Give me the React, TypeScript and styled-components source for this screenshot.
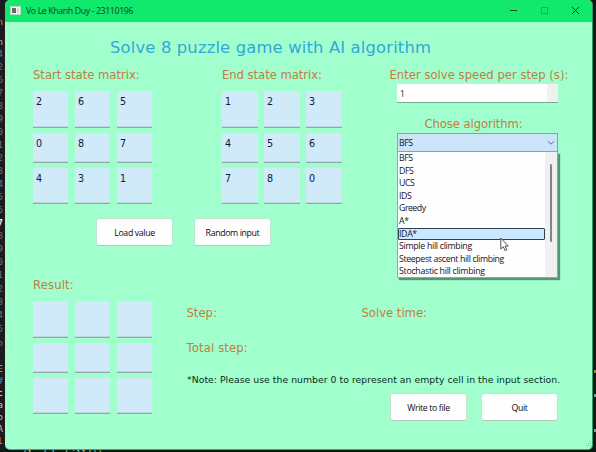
import React from "react";
import styled, { createGlobalStyle } from "styled-components";

const GlobalStyle = createGlobalStyle`
  * { box-sizing: border-box; }
  body { margin: 0; overflow: hidden; background: #151518; }
`;

const verdana = `"DejaVu Sans", Verdana, sans-serif`;
const segoe = `"Open Sans", "Segoe UI", sans-serif`;

const Desktop = styled.div`
  position: relative;
  display: grid;
  grid-template-columns: 5px 588px 3px;
  grid-template-rows: 450px 2px;
  width: 596px;
  height: 452px;
  overflow: hidden;
  background: #141619;
`;

const EditorEdge = styled.div`
  height: 450px;
  overflow: hidden;
  padding-top: 15px;
  background: #1c1c1e;
`;

const EditorLine = styled.div<{ $h: number; $color?: string; $bold?: boolean }>`
  display: flex;
  align-items: center;
  justify-content: flex-end;
  height: ${(p) => p.$h}px;
  padding-right: 2px;
  color: ${(p) => p.$color ?? "#6e7378"};
  font: ${(p) => (p.$bold ? "bold" : "normal")} 9px "DejaVu Sans Mono", monospace;
  line-height: 10px;
`;

const RightEdge = styled.div`
  height: 450px;
  padding-top: 370px;
  background: #15131a;
`;

const Speck = styled.div<{ $color: string; $gap: number }>`
  width: 2px;
  height: 3px;
  margin: 0 0 ${(p) => p.$gap}px 1px;
  background: ${(p) => p.$color};
`;

const BottomEdge = styled.div`
  grid-column: 1 / -1;
  height: 2px;
  overflow: hidden;
  padding-left: 22px;
  background: #0b1712;
  color: #c8d0cc;
  font: 9px/9px "DejaVu Sans Mono", monospace;
`;

const Window = styled.main`
  display: flex;
  flex-direction: column;
  width: 588px;
  height: 450px;
  overflow: hidden;
  border-radius: 5px;
  border-bottom: 1px solid #45a878;
  border-right: 1px solid #2d9a62;
  background: #a1ffce;
`;

const TitleBar = styled.header`
  display: flex;
  align-items: center;
  flex: none;
  height: 22px;
  padding: 0 12px 1px 5px;
  background: #11e96c;
  color: #07451f;
`;

const Caption = styled.span`
  flex: 1;
  margin-left: 5px;
  padding-top: 1px;
  font: 8.8px/14px ${segoe};
  letter-spacing: -0.39px;
  white-space: nowrap;
`;

const WindowControls = styled.div`
  display: flex;
  align-items: center;
  gap: 22px;
`;

const Content = styled.div`
  display: flex;
  flex-direction: column;
  flex: 1;
  padding: 14px 0 0 28px;
`;

const Heading = styled.h1`
  margin: 0 0 0 77px;
  height: 24px;
  color: #32a8d8;
  font: 400 16.4px/24px ${verdana};
  letter-spacing: 0.15px;
  white-space: nowrap;
`;

const InputArea = styled.section`
  display: grid;
  grid-template-columns: 356px 180px;
  height: 210px;
  padding-top: 6px;
`;

const Matrices = styled.div`
  display: grid;
  grid-template-columns: 189px 1fr;
`;

const Label = styled.div<{ $spacing?: number; $indent?: number }>`
  height: 18px;
  margin-left: ${(p) => p.$indent ?? 0}px;
  color: #bd8044;
  font: 11.6px/18px ${verdana};
  letter-spacing: ${(p) => p.$spacing ?? 0}px;
  white-space: nowrap;
`;

const Grid = styled.div<{ $cell?: number }>`
  display: grid;
  grid-template-columns: repeat(3, ${(p) => p.$cell ?? 34.5}px);
  grid-template-rows: 37px 30px 36px;
  column-gap: ${(p) => 42 - (p.$cell ?? 34.5)}px;
  row-gap: 5px;
  margin: 7px 0 0 0.4px;
`;

const Cell = styled.div`
  padding: 5px 0 0 2.6px;
  border-bottom: 1px solid #93a9a9;
  box-shadow: inset 0 -1px 0 #bfd5e0;
  background: #d0eafa;
  color: #0c212c;
  font: 9.6px/11px ${verdana};
`;

const Buttons = styled.div<{ $left: number; $gap: number; $top: number }>`
  display: flex;
  gap: ${(p) => p.$gap}px;
  margin: ${(p) => p.$top}px 0 0 ${(p) => p.$left}px;
`;

const Button = styled.button`
  width: 77px;
  height: 28px;
  padding: 1px 0 0;
  border: 1px solid #c3e5ce;
  border-bottom-color: #b4cdbb;
  border-radius: 3px;
  background: #fefefe;
  color: #0c0c12;
  font: 8.8px/14px ${segoe};
  letter-spacing: -0.38px;
`;

const Settings = styled.div`
  display: flex;
  flex-direction: column;
`;

const SpinBox = styled.div`
  display: flex;
  justify-content: space-between;
  flex: none;
  width: 161px;
  height: 19px;
  margin: 0 0 12px 8px;
  padding-left: 3px;
  border-bottom: 1px solid #6fae8c;
  background: #fdfefd;
  color: #1d2a22;
  font: 8.5px/19px ${segoe};
`;

const SpinButtons = styled.div`
  width: 11px;
  background: #f0f0f0;
`;

const Select = styled.div`
  position: relative;
  width: 161px;
  margin: 0 0 0 8px;
`;

const SelectBox = styled.div`
  display: flex;
  align-items: center;
  justify-content: space-between;
  height: 19px;
  padding: 1px 2px 0 1px;
  border: 1px solid #7ba6bd;
  background: #cce4f7;
  color: #10161f;
  font: 8.8px/16px ${segoe};
  letter-spacing: -0.5px;
`;

const Popup = styled.div`
  position: absolute;
  top: 19px;
  left: 0;
  display: flex;
  width: 161px;
  height: 126px;
  border: 1px solid #8fa9a0;
  border-top: 0;
  background: #fefefe;
  box-shadow: 2px 2px 1px rgba(30, 85, 55, 0.6);
`;

const Options = styled.ul`
  flex: 1;
  margin: 0;
  padding: 0;
  list-style: none;
`;

const Option = styled.li<{ $active?: boolean; $spacing: number }>`
  height: 12.6px;
  border: 1px solid ${(p) => (p.$active ? "#2b4257" : "transparent")};
  border-radius: 1px;
  background: ${(p) => (p.$active ? "#cce8ff" : "transparent")};
  color: #17131d;
  font: 8.8px/11.6px ${segoe};
  letter-spacing: ${(p) => p.$spacing}px;
  white-space: nowrap;
`;

const ScrollTrack = styled.div`
  width: 12px;
  padding: 12px 0 0 5px;
  background: #f0f0f0;
`;

const ScrollThumb = styled.div`
  width: 2px;
  height: 78px;
  border-radius: 1px;
  background: #858585;
`;

const Pointer = styled.svg`
  position: absolute;
  left: 103px;
  top: 104px;
`;

const OutputArea = styled.section`
  display: grid;
  grid-template-columns: 153.5px 1fr;
  padding-top: 6px;
`;

const Details = styled.div`
  display: flex;
  flex-direction: column;
  padding-top: 28px;
`;

const Stats = styled.div`
  display: grid;
  grid-template-columns: 175px 1fr;
  row-gap: 17px;
`;

const Note = styled.p`
  margin: 15px 0 0 0.5px;
  height: 16px;
  color: #062d18;
  font: 9.3px/16px ${verdana};
  letter-spacing: 0.03px;
  white-space: nowrap;
`;

const SizeGrip = styled.svg`
  position: absolute;
  left: 584px;
  top: 440px;
`;

type Line = { t: string; h: number; c?: string; b?: boolean };

const editorLines: Line[] = [
  { t: "n", h: 14, c: "#c98a63" },
  { t: "", h: 6 },
  { t: "n", h: 13, c: "#b8b8b8" },
  ...["4", "2", "6", "7", "8", "9", "0", "1", "2", "3", "4", "5", "6"].map((t) => ({ t, h: 12.95 })),
  { t: "7", h: 13, c: "#e4e4e4", b: true },
  { t: "8", h: 13 },
  { t: "9", h: 13.3 },
  { t: "0", h: 13.3 },
  { t: "1", h: 13.3 },
  { t: "2", h: 13.3 },
  { t: "3", h: 13.3 },
  { t: "4", h: 13.3 },
  { t: "5", h: 13.3 },
  { t: "o", h: 15 },
  { t: "", h: 13 },
  { t: "E", h: 12, c: "#b3b37a" },
  { t: "#", h: 12, c: "#2e9cc4" },
  { t: "c", h: 12, c: "#d6d6d6" },
  { t: "a", h: 12, c: "#c2c2c2" },
  { t: "o", h: 12, c: "#c2c2c2" },
  { t: "A", h: 12, c: "#c2c2c2" },
  { t: "l", h: 12, c: "#d0a184" },
];

const options = [
  { name: "BFS", spacing: -0.5 },
  { name: "DFS", spacing: -0.5 },
  { name: "UCS", spacing: -0.45 },
  { name: "IDS", spacing: -0.4 },
  { name: "Greedy", spacing: -0.52 },
  { name: "A*", spacing: -0.3 },
  { name: "IDA*", spacing: -0.35 },
  { name: "Simple hill climbing", spacing: -0.3 },
  { name: "Steepest ascent hill climbing", spacing: -0.37 },
  { name: "Stochastic hill climbing", spacing: -0.29 },
];

function Matrix({ values, cell }: { values: string[]; cell?: number }) {
  return (
    <Grid $cell={cell}>
      {values.map((v, i) => (
        <Cell key={i}>{v}</Cell>
      ))}
    </Grid>
  );
}

function AppIcon() {
  return (
    <svg width="11" height="9" viewBox="0 0 11 9">
      <rect x="0.5" y="0.5" width="10" height="8" fill="#f3f5f4" stroke="#b5dcc2" />
      <rect x="2" y="2" width="4" height="5" fill="#55736b" />
      <rect x="7" y="2" width="2" height="5" fill="#cfd6d3" />
    </svg>
  );
}

export default function App() {
  return (
    <>
      <GlobalStyle />
      <Desktop>
        <EditorEdge>
          {editorLines.map((l, i) => (
            <EditorLine key={i} $h={l.h} $color={l.c} $bold={l.b}>
              {l.t}
            </EditorLine>
          ))}
        </EditorEdge>
        <Window>
          <TitleBar>
            <AppIcon />
            <Caption>Vo Le Khanh Duy - 23110196</Caption>
            <WindowControls>
              <svg width="9" height="9" viewBox="0 0 9 9">
                <path d="M1 4.5h7" stroke="#095026" />
              </svg>
              <svg width="9" height="9" viewBox="0 0 9 9">
                <rect x="1.5" y="1.5" width="6" height="6" fill="none" stroke="#0cb854" />
              </svg>
              <svg width="9" height="9" viewBox="0 0 9 9">
                <path d="M1 1l7 7M8 1L1 8" stroke="#07451f" />
              </svg>
            </WindowControls>
          </TitleBar>
          <Content>
            <Heading>Solve 8 puzzle game with AI algorithm</Heading>
            <InputArea>
              <div>
                <Matrices>
                  <div>
                    <Label>Start state matrix:</Label>
                    <Matrix values={["2", "6", "5", "0", "8", "7", "4", "3", "1"]} />
                  </div>
                  <div>
                    <Label $spacing={-0.03}>End state matrix:</Label>
                    <Matrix cell={35.5} values={["1", "2", "3", "4", "5", "6", "7", "8", "0"]} />
                  </div>
                </Matrices>
                <Buttons $left={63} $gap={21} $top={14}>
                  <Button>Load value</Button>
                  <Button>Random input</Button>
                </Buttons>
              </div>
              <Settings>
                <Label $indent={0.5} $spacing={0.02}>Enter solve speed per step (s):</Label>
                <SpinBox>
                  <span>1</span>
                  <SpinButtons />
                </SpinBox>
                <Label $indent={35.5} $spacing={-0.07}>
                  Chose algorithm:
                </Label>
                <Select>
                  <SelectBox>
                    <span>BFS</span>
                    <svg width="8" height="6" viewBox="0 0 8 6">
                      <path d="M1 1.2l3 3 3-3" fill="none" stroke="#527287" />
                    </svg>
                  </SelectBox>
                  <Popup>
                    <Options>
                      {options.map((o) => (
                        <Option key={o.name} $active={o.name === "IDA*"} $spacing={o.spacing}>
                          {o.name}
                        </Option>
                      ))}
                    </Options>
                    <ScrollTrack>
                      <ScrollThumb />
                    </ScrollTrack>
                  </Popup>
                  <Pointer width="9" height="15" viewBox="0 0 9 15">
                    <path
                      d="M0.8 1v11l2.5-2.3 1.8 4 1.7-.8-1.8-3.8h3.2z"
                      fill="#fff"
                      stroke="#3c4248"
                      strokeWidth="0.9"
                    />
                  </Pointer>
                </Select>
              </Settings>
            </InputArea>
            <OutputArea>
              <div>
                <Label $spacing={0.15}>Result:</Label>
                <Matrix values={Array(9).fill("")} />
              </div>
              <Details>
                <Stats>
                  <Label>Step:</Label>
                  <Label>Solve time:</Label>
                  <Label $spacing={0.15}>Total step:</Label>
                </Stats>
                <Note>*Note: Please use the number 0 to represent an empty cell in the input section.</Note>
                <Buttons $left={203.5} $gap={14} $top={5}>
                  <Button>Write to file</Button>
                  <Button>Quit</Button>
                </Buttons>
              </Details>
            </OutputArea>
          </Content>
        </Window>
        <RightEdge>
          <Speck $color="#8f8a3c" $gap={21} />
          <Speck $color="#7f98a3" $gap={32} />
          <Speck $color="#7f98a3" $gap={0} />
        </RightEdge>
        <BottomEdge>(lambda hill())</BottomEdge>
        <SizeGrip width="8" height="8" viewBox="0 0 8 8">
          <path d="M6 1h1v1h-1zM6 3h1v1h-1zM6 5h1v1h-1zM4 3h1v1h-1zM4 5h1v1h-1zM2 5h1v1h-1z" fill="#8cc8a6" />
        </SizeGrip>
      </Desktop>
    </>
  );
}
